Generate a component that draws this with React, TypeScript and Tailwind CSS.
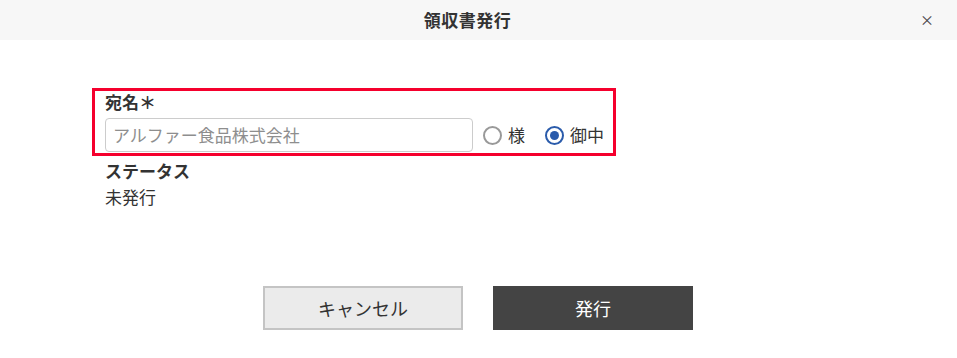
import React from "react";

export default function App() {
  const font = { fontFamily: '"Noto Sans CJK JP", "Noto Sans", sans-serif' };
  return (
    <div className="w-[957px] h-[358px] bg-white text-[#333] relative" style={font}>
      <div className="h-[40px] bg-[#f7f7f7] flex items-center justify-center relative">
        <span className="text-[17px] font-bold mr-[22px] tracking-[0.5px]">領収書発行</span>
        <span className="absolute left-[920px] top-[9px] text-[14px] text-[#444]">×</span>
      </div>
      <div className="ml-[92px] mt-[48px] w-[524px] h-[68px] border-[3px] border-[#f5002d] pl-[10px] pt-[0px]">
        <div className="text-[17px] font-bold leading-[22px]">宛名＊</div>
        <div className="flex items-center mt-[5px]">
          <div className="w-[368px] h-[34px] border border-[#ccc] rounded-[4px] flex items-center px-[7px] text-[17px] text-[#8e8e8e]">
            アルファー食品株式会社
          </div>
          <div className="flex items-center ml-[10px]">
            <span className="w-[19px] h-[19px] rounded-full border-2 border-[#999] bg-white"></span>
            <span className="ml-[6px] text-[17px]">様</span>
          </div>
          <div className="flex items-center ml-[20px]">
            <span className="w-[19px] h-[19px] rounded-full border-2 border-[#2a5bab] bg-white flex items-center justify-center">
              <span className="w-[9px] h-[9px] rounded-full bg-[#2a5bab]"></span>
            </span>
            <span className="ml-[6px] text-[17px]">御中</span>
          </div>
        </div>
      </div>
      <div className="ml-[105px] mt-[3px]">
        <div className="text-[17px] font-bold leading-[24px]">ステータス</div>
        <div className="text-[17px] leading-[24px] mt-[2px]">未発行</div>
      </div>
      <div className="flex justify-center gap-[30px] mt-[77px] ml-[-1px]">
        <button className="w-[200px] h-[44px] bg-[#ebebeb] border-2 border-[#c4c4c4] text-[18px] text-[#333]">キャンセル</button>
        <button className="w-[200px] h-[44px] bg-[#444] text-white text-[18px]">発行</button>
      </div>
    </div>
  );
}
